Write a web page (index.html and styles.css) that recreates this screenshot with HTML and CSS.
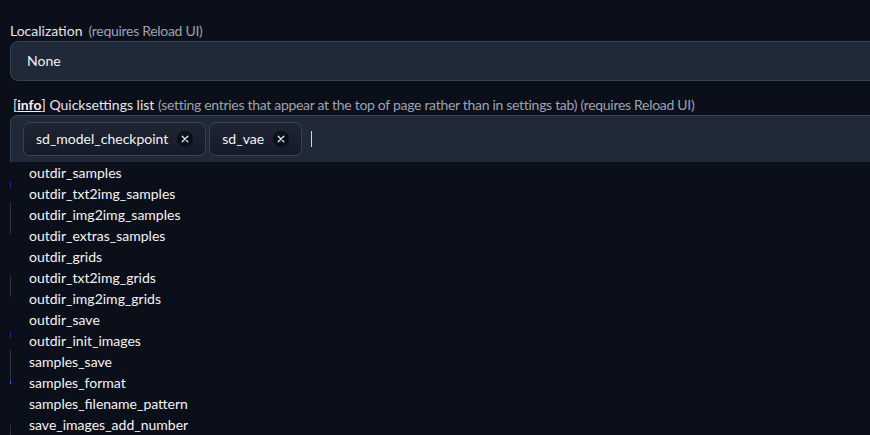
FILE: index.html
```html
<!DOCTYPE html>
<html>
<head>
<meta charset="utf-8">
<link rel="stylesheet" href="styles.css">
</head>
<body>
<div class="page">
  <div class="field">
    <div class="label"><span class="main">Localization</span><span class="note">(requires Reload UI)</span></div>
    <div class="select">None</div>
  </div>
  <div class="field second">
    <div class="label">[<a class="info">info</a>] <span class="main">Quicksettings list</span> <span class="note">(setting entries that appear at the top of page rather than in settings tab) (requires Reload UI)</span></div>
    <div class="multi">
      <div class="chip"><span>sd_model_checkpoint</span><span class="x"><svg width="16" height="16" viewBox="0 0 16 16"><path d="M5.2 5.2 L10.8 10.8 M10.8 5.2 L5.2 10.8" stroke="#e5e7eb" stroke-width="1.3" stroke-linecap="round"/></svg></span></div>
      <div class="chip"><span>sd_vae</span><span class="x"><svg width="16" height="16" viewBox="0 0 16 16"><path d="M5.2 5.2 L10.8 10.8 M10.8 5.2 L5.2 10.8" stroke="#e5e7eb" stroke-width="1.3" stroke-linecap="round"/></svg></span></div>
      <div class="caret"></div>
    </div>
    <div class="dropwrap">
      <div class="stripe">
        <i class="s blue" style="top:20px;height:6px"></i>
        <i class="s" style="top:40px;height:32px"></i>
        <i class="s" style="top:113px;height:22px"></i>
        <i class="s blue" style="top:170px;height:6px"></i>
        <i class="s" style="top:188px;height:32px"></i>
        <i class="s bright" style="top:219px;height:3px"></i>
        <i class="s" style="top:263px;height:12px"></i>
      </div>
      <ul class="list">
        <li>outdir_samples</li>
        <li>outdir_txt2img_samples</li>
        <li>outdir_img2img_samples</li>
        <li>outdir_extras_samples</li>
        <li>outdir_grids</li>
        <li>outdir_txt2img_grids</li>
        <li>outdir_img2img_grids</li>
        <li>outdir_save</li>
        <li>outdir_init_images</li>
        <li>samples_save</li>
        <li>samples_format</li>
        <li>samples_filename_pattern</li>
        <li>save_images_add_number</li>
      </ul>
    </div>
  </div>
</div>
</body>
</html>
```
FILE: styles.css
```css
html, body {
  margin: 0;
  padding: 0;
  background: #0b0f19;
  overflow: hidden;
  width: 870px;
  height: 435px;
}
body {
  font-family: "Lato", "Noto Sans", sans-serif;
  font-size: 14px;
  color: #e5e7eb;
}
.page {
  padding: 20px 0 0 10px;
  width: 1000px;
}
.label {
  height: 21px;
  line-height: 21px;
  display: flex;
  gap: 6px;
  white-space: nowrap;
}
.label .note {
  color: #9ca3af;
  letter-spacing: -0.3px;
}
.second .label {
  display: block;
  padding-left: 3px;
  height: 20px;
  line-height: 20px;
}
.info {
  font-weight: 700;
  text-decoration: underline;
  color: #f3f4f6;
}
.select {
  height: 38px;
  line-height: 38px;
  border: 1px solid #374151;
  border-radius: 8px;
  background: #1f2937;
  padding-left: 16px;
  color: #f3f4f6;
}
.second { margin-top: 14px; }
.multi {
  height: 45px;
  border: 1px solid #374151;
  border-bottom-color: #1f2937;
  border-radius: 8px 8px 0 0;
  background: #1f2937;
  display: flex;
  align-items: center;
  padding-left: 12px;
  gap: 3px;
}
.chip {
  height: 32px;
  border: 1px solid #374151;
  border-radius: 7px;
  background: linear-gradient(to bottom, #1f2533, #141a26);
  display: flex;
  align-items: center;
  padding: 0 12px 0 12px;
  gap: 9px;
  color: #f3f4f6;
}
.x {
  width: 16px;
  height: 16px;
  border-radius: 50%;
  background: #0b0f19;
  display: flex;
}
.caret {
  width: 1px;
  height: 16px;
  background: #d1d5db;
  margin-left: 6px;
}
.dropwrap {
  display: flex;
  position: relative;
}
.stripe {
  width: 1px;
  position: relative;
  height: 280px;
}
.s {
  position: absolute;
  left: 0;
  width: 1px;
  background: #2b3140;
}
.s.blue { background: #1e2a8a; }
.s.bright { background: #2563eb; }
.list {
  list-style: none;
  margin: 0;
  padding: 0 0 0 18px;
}
.list li {
  height: 21px;
  line-height: 21px;
  color: #f3f4f6;
  white-space: nowrap;
}
```
